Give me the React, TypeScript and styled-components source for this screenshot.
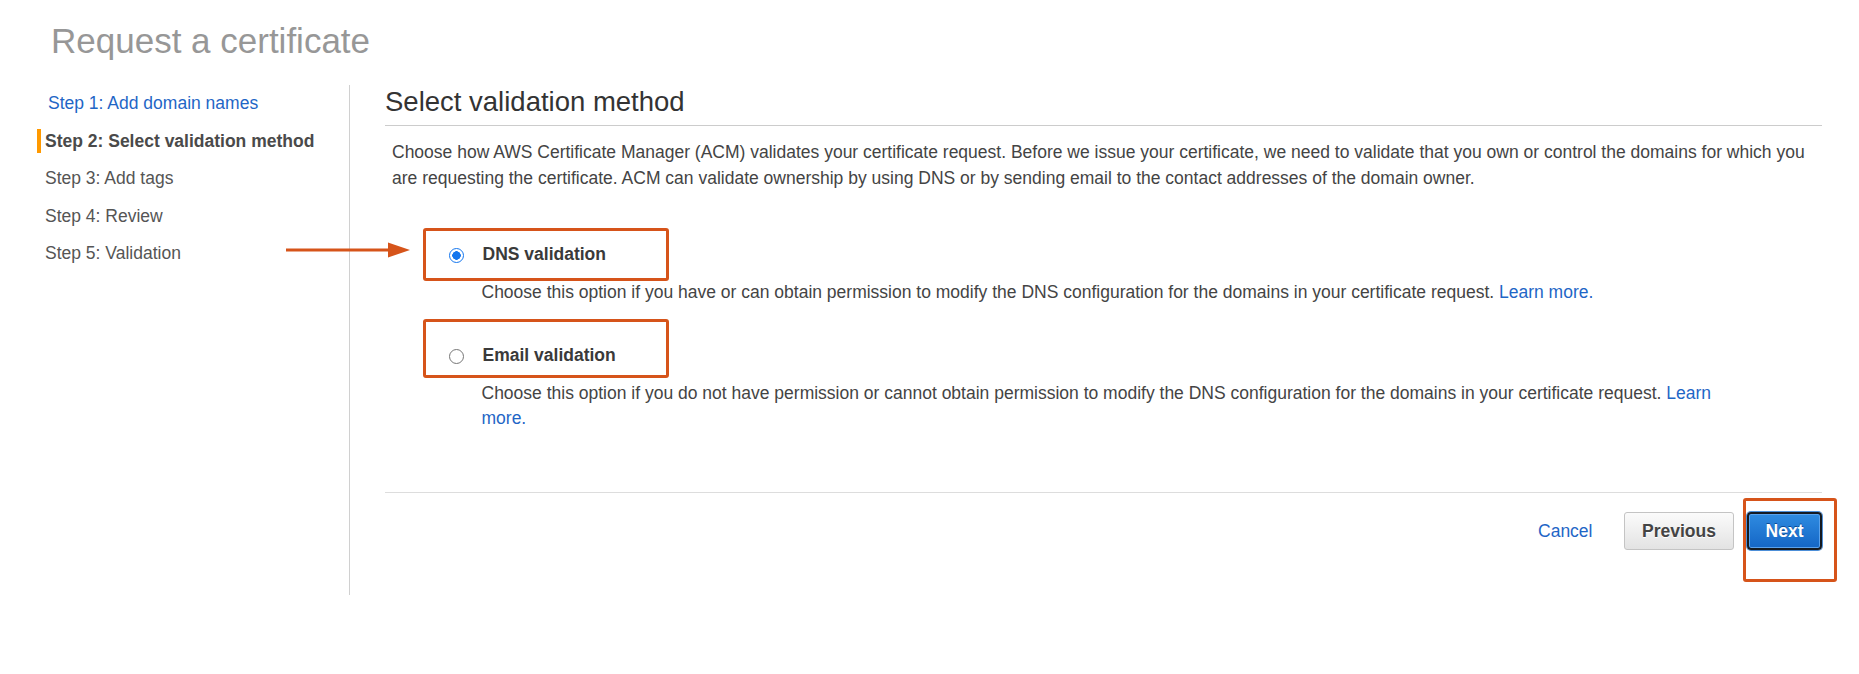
import React, { useState } from 'react'
import styled, { createGlobalStyle } from 'styled-components'

const GlobalStyle = createGlobalStyle`
  html, body {
    margin: 0;
    padding: 0;
    background: #fff;
  }
  * {
    box-sizing: border-box;
  }
`

const steps = [
  { label: 'Step 1: Add domain names', done: true },
  { label: 'Step 2: Select validation method', active: true },
  { label: 'Step 3: Add tags' },
  { label: 'Step 4: Review' },
  { label: 'Step 5: Validation' },
]

const options = [
  {
    id: 'dns',
    label: 'DNS validation',
    text: 'Choose this option if you have or can obtain permission to modify the DNS configuration for the domains in your certificate request.',
    box: { top: -14, height: 53 },
  },
  {
    id: 'email',
    label: 'Email validation',
    text: 'Choose this option if you do not have permission or cannot obtain permission to modify the DNS configuration for the domains in your certificate request.',
    box: { top: -24, height: 59 },
  },
]

const App: React.FC = () => {
  const [method, setMethod] = useState('dns')

  return (
    <Page>
      <GlobalStyle />
      <Title>Request a certificate</Title>
      <Layout>
        <Sidebar>
          {steps.map((s) => (
            <Step key={s.label} $active={!!s.active} $done={!!s.done}>
              <StepMarker $active={!!s.active} />
              {s.label}
            </Step>
          ))}
        </Sidebar>
        <Main>
          <Heading>Select validation method</Heading>
          <Intro>
            Choose how AWS Certificate Manager (ACM) validates your certificate request. Before we issue your
            certificate, we need to validate that you own or control the domains for which you are requesting the
            certificate. ACM can validate ownership by using DNS or by sending email to the contact addresses of the
            domain owner.
          </Intro>
          <OptionList>
            {options.map((o) => (
              <Option key={o.id}>
                <OptionRow onClick={() => setMethod(o.id)}>
                  {o.id === 'dns' && (
                    <Arrow width="126" height="16" viewBox="0 0 126 16">
                      <line x1="0" y1="8" x2="104" y2="8" stroke="#d6541a" strokeWidth="3" />
                      <polygon points="102,0.5 124,8 102,15.5" fill="#d6541a" />
                    </Arrow>
                  )}
                  <Highlight $top={o.box.top} $height={o.box.height} />
                  <Radio $checked={method === o.id} />
                  <OptionLabel>{o.label}</OptionLabel>
                </OptionRow>
                <OptionText>
                  {o.text} <Link href="#">Learn more.</Link>
                </OptionText>
              </Option>
            ))}
          </OptionList>
          <Footer>
            <Link href="#">Cancel</Link>
            <SecondaryButton>Previous</SecondaryButton>
            <PrimaryButton>
              Next
              <ButtonHighlight />
            </PrimaryButton>
          </Footer>
        </Main>
      </Layout>
    </Page>
  )
}

const orange = '#d6541a'
const linkBlue = '#1f66c6'

const Page = styled.div`
  padding: 21px 37px 0 37px;
  font-family: 'Liberation Sans', Arial, Helvetica, sans-serif;
  font-size: 17.5px;
  line-height: 25px;
  color: #444;
`

const Title = styled.h1`
  margin: 0 0 24px 14px;
  font-size: 35px;
  line-height: 40px;
  font-weight: 400;
  color: #979797;
`

const Layout = styled.div`
  display: flex;
  align-items: flex-start;
`

const Sidebar = styled.nav`
  width: 313px;
  flex-shrink: 0;
  min-height: 510px;
  border-right: 1px solid #d0d0d0;
`

const Step = styled.div<{ $active: boolean; $done: boolean }>`
  display: flex;
  align-items: center;
  line-height: 37.5px;
  font-size: 17.5px;
  font-weight: ${(p) => (p.$active ? 700 : 400)};
  color: ${(p) => (p.$done ? linkBlue : p.$active ? '#4a4a4a' : '#555')};
  padding-left: ${(p) => (p.$done ? 3 : 0)}px;
`

const StepMarker = styled.span<{ $active: boolean }>`
  width: 3.5px;
  height: 24px;
  margin-right: 4.5px;
  background: ${(p) => (p.$active ? '#ff9900' : 'transparent')};
`

const Main = styled.main`
  flex: 1;
  padding-left: 35px;
`

const Heading = styled.h2`
  margin: 0;
  padding-bottom: 6px;
  border-bottom: 1px solid #ccc;
  font-size: 27.5px;
  line-height: 34px;
  font-weight: 400;
  color: #333;
`

const Intro = styled.p`
  margin: 13px 0 0;
  padding-left: 7px;
  line-height: 26px;
`

const OptionList = styled.div`
  display: flex;
  flex-direction: column;
  gap: 38px;
  margin-top: 50.5px;
  padding-left: 64px;
`

const Option = styled.div`
  display: flex;
  flex-direction: column;
`

const OptionRow = styled.label`
  position: relative;
  display: flex;
  align-items: center;
  height: 25px;
  cursor: pointer;
`

const Radio = styled.span<{ $checked: boolean }>`
  width: 15px;
  height: 15px;
  margin-top: 2px;
  margin-left: -0.5px;
  margin-right: 19px;
  border-radius: 50%;
  flex-shrink: 0;
  border: ${(p) => (p.$checked ? '1.5px solid #1476ee' : '1px solid #767676')};
  background: ${(p) => (p.$checked ? 'radial-gradient(circle, #1476ee 0 4px, #fff 4.5px)' : '#fff')};
`

const OptionLabel = styled.span`
  font-weight: 700;
  color: #3a3a3a;
`

const OptionText = styled.div`
  margin: 13px 0 0 32.5px;
  max-width: 1250px;
`

const Highlight = styled.span<{ $top: number; $height: number }>`
  position: absolute;
  left: -26px;
  top: ${(p) => p.$top}px;
  width: 246px;
  height: ${(p) => p.$height}px;
  border: 3px solid ${orange};
  border-radius: 3px;
  pointer-events: none;
`

const Arrow = styled.svg`
  position: absolute;
  left: -163px;
  top: 0;
`

const Link = styled.a`
  color: ${linkBlue};
  text-decoration: none;
`

const Footer = styled.div`
  display: flex;
  justify-content: flex-end;
  align-items: center;
  margin-top: 61.5px;
  padding-top: 19px;
  border-top: 1px solid #ddd;

  ${Link} {
    margin-right: 31.5px;
  }
`

const BaseButton = styled.button`
  height: 38px;
  padding: 0;
  font-family: inherit;
  font-size: 17.5px;
  font-weight: 700;
  border-radius: 3px;
  cursor: pointer;
`

const SecondaryButton = styled(BaseButton)`
  width: 110px;
  color: #444;
  border: 1px solid #c4c4c4;
  background: linear-gradient(#fbfbfb, #e3e3e3);
  text-shadow: 0 1px 0 #fff;
`

const PrimaryButton = styled(BaseButton)`
  position: relative;
  width: 75px;
  margin-left: 13px;
  color: #fff;
  border: 2px solid #141a22;
  border-radius: 4px;
  background: linear-gradient(#2f8be0, #1466c6);
  box-shadow: 0 0 0 1px #4d8fd8, inset 0 0 0 1px #5aa2ec;
  text-shadow: 0 -1px 0 #0d4a94;
`

const ButtonHighlight = styled.span`
  position: absolute;
  left: -6px;
  top: -16px;
  width: 94px;
  height: 84px;
  border: 3px solid ${orange};
  border-radius: 3px;
  pointer-events: none;
`

export default App
